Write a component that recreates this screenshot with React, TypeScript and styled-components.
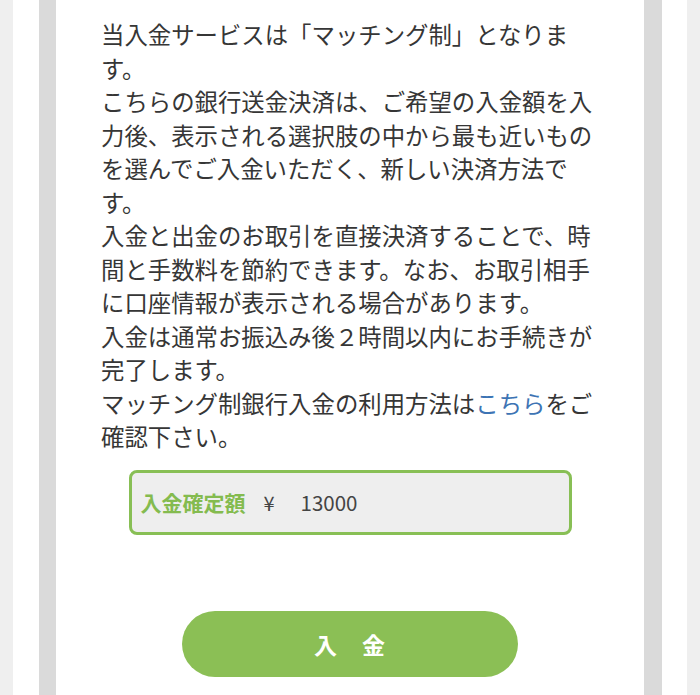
import React, { useState } from 'react';
import styled, { createGlobalStyle } from 'styled-components';

const GlobalStyle = createGlobalStyle`
  html, body {
    margin: 0;
    padding: 0;
    background: #efefef;
  }
  body {
    font-family: "Noto Sans CJK JP", "Noto Sans", sans-serif;
    color: #333;
  }
`;

const lines = [
  '当入金サービスは「マッチング制」となります。',
  'こちらの銀行送金決済は、ご希望の入金額を入力後、表示される選択肢の中から最も近いものを選んでご入金いただく、新しい決済方法です。',
  '入金と出金のお取引を直接決済することで、時間と手数料を節約できます。なお、お取引相手に口座情報が表示される場合があります。',
  '入金は通常お振込み後２時間以内にお手続きが完了します。',
];

const Deposit = () => {
  const [amount] = useState('13000');

  const handleDeposit = (e: any) => {
    e.preventDefault();
    console.log(amount);
  };

  return (
    <Page>
      <GlobalStyle />
      <Column>
        <Panel>
          <Notice>
            {lines.map((line) => (
              <Line key={line}>{line}</Line>
            ))}
            <Line>
              マッチング制銀行入金の利用方法は<Link href="#">こちら</Link>
              をご確認下さい。
            </Line>
          </Notice>
          <AmountBox>
            <AmountLabel>入金確定額</AmountLabel>
            <Yen>¥</Yen>
            <AmountValue>{amount}</AmountValue>
          </AmountBox>
          <ButtonContainer>
            <SubmitButton type="button" onClick={(e) => handleDeposit(e)}>
              入　金
            </SubmitButton>
          </ButtonContainer>
        </Panel>
      </Column>
    </Page>
  );
};

const Page = styled.div`
  display: flex;
  justify-content: center;
  min-height: 100vh;
  padding: 0 13px;
  background: #efefef;
`;

const Column = styled.div`
  flex: 1;
  display: flex;
  padding: 0 25px 0 26px;
  background: #fff;
`;

const Panel = styled.div`
  flex: 1;
  display: flex;
  flex-direction: column;
  align-items: center;
  border-left: 17px solid #dadada;
  border-right: 18px solid #dadada;
  background: #fff;
  padding: 18px 0 0;
`;

const Notice = styled.div`
  box-sizing: border-box;
  width: 100%;
  padding: 0 43px 0 45px;
  font-size: 23.4px;
  line-height: 33.5px;
  color: #363636;
`;

const Line = styled.p`
  margin: 0;
`;

const Link = styled.a`
  color: #3d74b4;
  text-decoration: none;
`;

const AmountBox = styled.div`
  box-sizing: border-box;
  display: flex;
  align-items: center;
  width: 443px;
  height: 65px;
  margin-top: 16px;
  padding: 0 0 0 9px;
  border: 3px solid #88bf55;
  border-radius: 8px;
  background: #eeeeee;
`;

const AmountLabel = styled.span`
  font-size: 21px;
  font-weight: 700;
  color: #84bb4f;
`;

const Yen = styled.span`
  margin-left: 18px;
  font-size: 20px;
  color: #444;
`;

const AmountValue = styled.span`
  margin-left: 26px;
  font-size: 20.5px;
  color: #444;
`;

const ButtonContainer = styled.div`
  display: flex;
  justify-content: center;
  margin-top: 76px;
`;

const SubmitButton = styled.button`
  width: 336px;
  height: 66px;
  border: none;
  border-radius: 33px;
  background: #8bbf55;
  color: #fff;
  font-family: "Noto Sans CJK JP", sans-serif;
  font-size: 23px;
  font-weight: 700;
  letter-spacing: 1px;
  cursor: pointer;
`;

export default Deposit;
